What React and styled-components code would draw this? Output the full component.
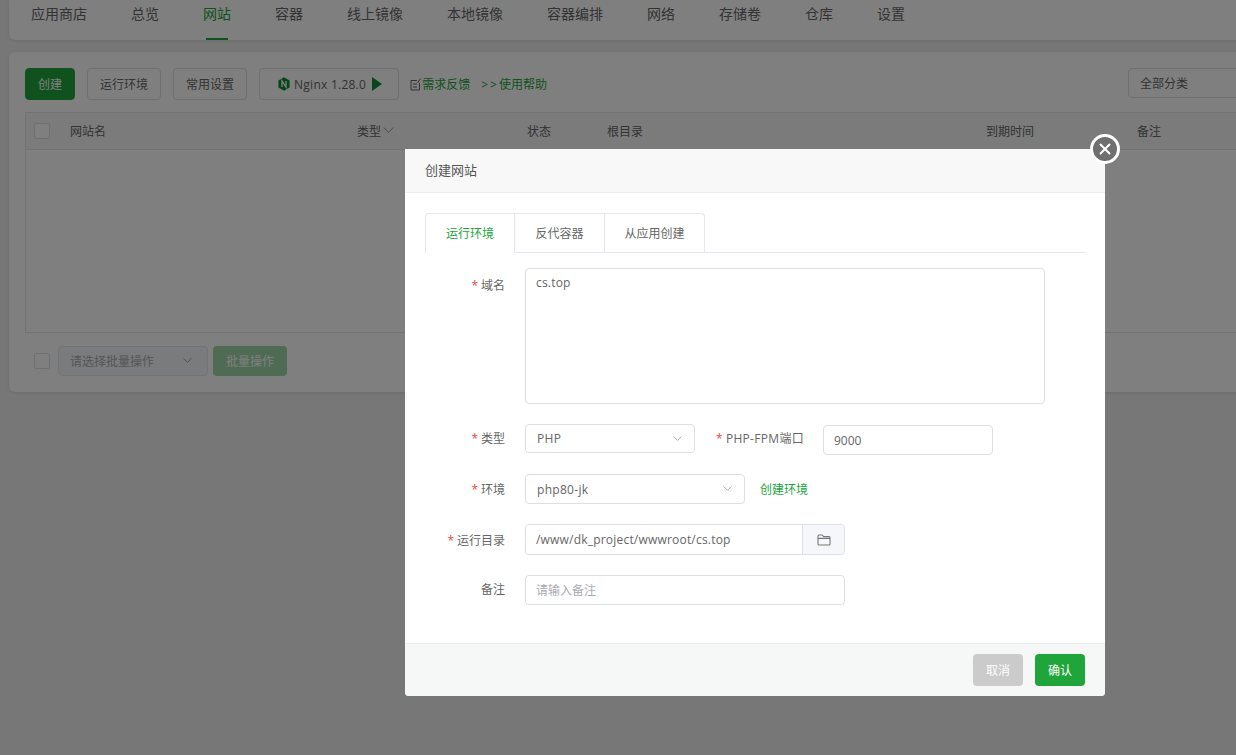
import React from 'react';
import styled, { createGlobalStyle } from 'styled-components';
import { X } from 'lucide-react';

const GlobalStyle = createGlobalStyle`
  html, body {
    margin: 0;
    height: 100%;
    overflow: hidden;
    background: #eeeeee;
    font-family: "Open Sans", "Noto Sans CJK SC", sans-serif;
    font-size: 12px;
    color: #666;
  }
  * { box-sizing: border-box; }
`;

const Page = styled.div`
  width: 1294px;
  padding-left: 9px;
`;

const NavBar = styled.nav`
  display: flex;
  gap: 44px;
  height: 40px;
  padding-left: 22px;
  background: #fff;
  border-radius: 0 0 6px 6px;
  box-shadow: 0 1px 3px rgba(0, 0, 0, 0.1);
  margin-bottom: 12px;
`;

const NavItem = styled.a`
  position: relative;
  font-size: 14px;
  line-height: 28px;
  color: ${(p) => (p.$active ? '#20a53a' : '#666')};
  &::after {
    content: '';
    display: ${(p) => (p.$active ? 'block' : 'none')};
    width: 22px;
    height: 2px;
    background: #20a53a;
    position: absolute;
    left: 3px;
    top: 38px;
  }
`;

const Panel = styled.section`
  height: 340px;
  padding: 16px;
  background: #fff;
  border-radius: 6px;
  box-shadow: 0 1px 3px rgba(0, 0, 0, 0.1);
`;

const Toolbar = styled.div`
  display: flex;
  align-items: flex-start;
  gap: 12px;
  height: 44px;
`;

const Button = styled.button`
  height: 32px;
  padding: ${(p) => (p.$wide ? '0 16px 0 18px' : '0 12px')};
  min-width: 50px;
  border: 1px solid ${(p) => (p.$primary ? '#20a53a' : '#dcdfe6')};
  border-radius: 4px;
  background: ${(p) => (p.$primary ? '#20a53a' : '#fff')};
  color: ${(p) => (p.$primary ? '#fff' : '#666')};
  font: inherit;
  letter-spacing: ${(p) => (p.$wide ? '0.25px' : '0')};
  display: inline-flex;
  align-items: center;
  justify-content: center;
  gap: 4px;
`;

const PlayGlyph = styled.svg`
  margin-left: 2px;
`;

const LinkRow = styled.div`
  display: flex;
  align-items: center;
  height: 32px;
  margin-left: -1px;
  color: #20a53a;
`;

const HelpLink = styled.a`
  margin-left: ${(p) => p.$gap || 0}px;
  color: #20a53a;
`;

const Arrows = styled.span`
  letter-spacing: 2px;
`;

const CategorySelect = styled.div`
  margin-left: auto;
  width: 150px;
  height: 30px;
  padding-left: 11px;
  line-height: 30px;
  border: 1px solid #dcdfe6;
  border-radius: 4px;
`;

const Table = styled.div`
  height: 221px;
  border: 1px solid #e4e7ed;
`;

const TableHead = styled.div`
  display: grid;
  grid-template-columns: 44px 287px 170px 80px 379px 151px 1fr;
  align-items: center;
  height: 37px;
  padding-bottom: 1px;
  background: #f6f6f6;
  border-bottom: 1px solid #e4e7ed;
`;

const HeadCell = styled.span`
  display: flex;
  align-items: center;
  gap: 2px;
  color: #666;
`;

const Check = styled.span`
  display: block;
  width: 16px;
  height: 16px;
  margin-left: ${(p) => p.$left || 0}px;
  border: 1px solid #dcdfe6;
  border-radius: 2px;
  background: #fff;
`;

const BatchRow = styled.div`
  display: flex;
  align-items: center;
  gap: 5px;
  margin-top: 13px;
`;

const BatchSelect = styled.div`
  display: flex;
  align-items: center;
  justify-content: space-between;
  width: 150px;
  height: 30px;
  margin-left: 3px;
  padding: 0 15px 0 11px;
  border: 1px solid #e4e7ed;
  border-radius: 4px;
  background: #f5f7fa;
  color: #a8abb2;
`;

const BatchButton = styled.button`
  width: 74px;
  height: 30px;
  border: none;
  border-radius: 4px;
  background: #a0d7a9;
  color: #fff;
  font: inherit;
`;

const Overlay = styled.div`
  position: fixed;
  inset: 0;
  background: rgba(0, 0, 0, 0.5);
  padding: 149px 0 0 405px;
`;

const Modal = styled.div`
  position: relative;
  display: flex;
  flex-direction: column;
  width: 700px;
  height: 547px;
  background: #fff;
  border-radius: 0 0 4px 4px;
`;

const CloseButton = styled.button`
  position: absolute;
  top: -15px;
  right: -15px;
  width: 30px;
  height: 30px;
  padding: 0;
  display: flex;
  align-items: center;
  justify-content: center;
  border: 3px solid #fff;
  border-radius: 50%;
  background: #6f6f6f;
  color: #fff;
`;

const ModalTitle = styled.header`
  height: 44px;
  padding-left: 20px;
  line-height: 43px;
  font-size: 13px;
  color: #555;
  background: #f8f8f8;
  border-bottom: 1px solid #eee;
`;

const ModalBody = styled.div`
  flex: 1;
  padding: 20px;
`;

const Tabs = styled.div`
  display: flex;
  height: 40px;
  margin-bottom: 15px;
  border-bottom: 1px solid #e4e7ed;
`;

const Tab = styled.div`
  width: ${(p) => p.$w}px;
  height: ${(p) => (p.$active ? '40px' : '39px')};
  line-height: 39px;
  text-align: center;
  background: #fff;
  color: ${(p) => (p.$active ? '#20a53a' : '#666')};
  border: 1px solid #e4e7ed;
  border-left-width: ${(p) => (p.$active ? '1px' : '0')};
  border-bottom: none;
  border-radius: ${(p) => p.$radius || '0'};
`;

const Form = styled.div`
  display: flex;
  flex-direction: column;
  gap: 20px;
`;

const Row = styled.div`
  display: flex;
  align-items: ${(p) => (p.$top ? 'flex-start' : 'center')};
`;

const Label = styled.label`
  flex: none;
  width: ${(p) => p.$w || 80}px;
  margin-left: ${(p) => p.$left || 0}px;
  margin-right: ${(p) => p.$right ?? 20}px;
  padding-top: ${(p) => p.$pt || 0}px;
  padding-bottom: ${(p) => p.$pb || 0}px;
  text-align: right;
  color: #666;
  white-space: nowrap;
  letter-spacing: ${(p) => (p.$latin ? '0.3px' : '0')};
`;

const Star = styled.span`
  color: #ef4444;
  margin-right: 3px;
`;

const Textarea = styled.textarea`
  display: block;
  width: 520px;
  height: 136px;
  padding: 5px 10px;
  resize: none;
  border: 1px solid #dcdfe6;
  border-radius: 4px;
  color: #666;
  font: inherit;
  letter-spacing: 0.2px;
  outline: none;
`;

const Input = styled.input`
  width: ${(p) => p.$w || 320}px;
  height: 30px;
  margin: ${(p) => (p.$low ? '1px 0 -1px' : '0')};
  padding: 0 10px;
  border: 1px solid #dcdfe6;
  border-radius: 4px;
  color: #666;
  font: inherit;
  outline: none;
  &::placeholder { color: #a8abb2; }
`;

const Select = styled.div`
  display: flex;
  align-items: center;
  justify-content: space-between;
  align-self: flex-start;
  width: ${(p) => p.$w}px;
  height: ${(p) => p.$h || 30}px;
  padding: 0 12px 0 11px;
  border: 1px solid #dcdfe6;
  border-radius: 4px;
  color: #666;
  letter-spacing: 0.3px;
`;

const GreenLink = styled.a`
  margin-left: 15px;
  color: #20a53a;
`;

const InputGroup = styled.div`
  display: flex;
  width: 320px;
  height: 31px;
  border: 1px solid #dcdfe6;
  border-radius: 4px;
  overflow: hidden;
`;

const GroupInput = styled.input`
  flex: 1;
  min-width: 0;
  padding: 0 10px;
  border: none;
  color: #666;
  font: inherit;
  letter-spacing: 0.2px;
  outline: none;
`;

const GroupAddon = styled.div`
  flex: none;
  width: 42px;
  display: flex;
  align-items: center;
  justify-content: center;
  background: #f5f7fa;
  border-left: 1px solid #dcdfe6;
  color: #777;
`;

const Footer = styled.footer`
  display: flex;
  justify-content: flex-end;
  gap: 12px;
  height: 53px;
  padding: 10px 20px 0;
  background: #f6f8f8;
  border-top: 1px solid #eee;
  border-radius: 0 0 4px 4px;
`;

const FooterButton = styled.button`
  width: 50px;
  height: 32px;
  border: none;
  border-radius: 4px;
  background: ${(p) => (p.$primary ? '#20a53a' : '#cbcbcb')};
  color: #fff;
  font: inherit;
`;

const NAV = ['应用商店', '总览', '网站', '容器', '线上镜像', '本地镜像', '容器编排', '网络', '存储卷', '仓库', '设置'];

function NginxIcon() {
  return (
    <svg width="12" height="14" viewBox="0 0 12 14">
      <path d="M6 0.3 11.6 3.5V10.5L6 13.7 0.4 10.5V3.5Z" fill="#0f8a3c" />
      <path d="M4 10V4L8 10V4" fill="none" stroke="#fff" strokeWidth="1.3" />
    </svg>
  );
}

function PlayIcon() {
  return (
    <PlayGlyph width="10" height="14" viewBox="0 0 10 14">
      <path d="M0 0 10 7 0 14Z" fill="#0f8a3c" />
    </PlayGlyph>
  );
}

function FeedbackIcon() {
  return (
    <svg width="11" height="13" viewBox="0 0 11 13" fill="none" stroke="#666" strokeWidth="1">
      <path d="M7 2.5H1V12H9.5V5" />
      <path d="M3 6H7M3 9H7" />
      <path d="M7.5 5 10.5 0.5" />
    </svg>
  );
}

function FolderIcon() {
  return (
    <svg width="14" height="12" viewBox="0 0 14 12" fill="none" stroke="currentColor" strokeWidth="1.1" strokeLinejoin="round">
      <path d="M1 2.2C1 1.5 1.4 1 2 1H5.2L6.6 2.6H12C12.6 2.6 13 3.1 13 3.6V10C13 10.6 12.6 11 12 11H2C1.4 11 1 10.6 1 10Z" />
      <path d="M1 4.4H13" />
    </svg>
  );
}

function Chevron({ w = 9 }) {
  return (
    <svg width={w} height={w * 0.56} viewBox="0 0 12 7" fill="none" stroke="#888" strokeWidth="1">
      <path d="M0.5 0.5 6 6 11.5 0.5" />
    </svg>
  );
}

function Required() {
  return <Star>*</Star>;
}

function App() {
  return (
    <>
      <GlobalStyle />
      <Page>
        <NavBar>
          {NAV.map((item) => (
            <NavItem key={item} $active={item === '网站'}>{item}</NavItem>
          ))}
        </NavBar>
        <Panel>
          <Toolbar>
            <Button $primary>创建</Button>
            <Button>运行环境</Button>
            <Button>常用设置</Button>
            <Button $wide>
              <NginxIcon />
              <span>Nginx 1.28.0</span>
              <PlayIcon />
            </Button>
            <LinkRow>
              <FeedbackIcon />
              <HelpLink $gap={1}>需求反馈</HelpLink>
              <HelpLink $gap={11}><Arrows>&gt;&gt;</Arrows>使用帮助</HelpLink>
            </LinkRow>
            <CategorySelect>全部分类</CategorySelect>
          </Toolbar>
          <Table>
            <TableHead>
              <Check $left={8} />
              <HeadCell>网站名</HeadCell>
              <HeadCell>类型<Chevron w={11} /></HeadCell>
              <HeadCell>状态</HeadCell>
              <HeadCell>根目录</HeadCell>
              <HeadCell>到期时间</HeadCell>
              <HeadCell>备注</HeadCell>
            </TableHead>
          </Table>
          <BatchRow>
            <Check $left={9} />
            <BatchSelect>请选择批量操作<Chevron /></BatchSelect>
            <BatchButton>批量操作</BatchButton>
          </BatchRow>
        </Panel>
      </Page>
      <Overlay>
        <Modal>
          <CloseButton><X size={18} strokeWidth={2.5} /></CloseButton>
          <ModalTitle>创建网站</ModalTitle>
          <ModalBody>
            <Tabs>
              <Tab $active $w={90} $radius="4px 0 0 0">运行环境</Tab>
              <Tab $w={90}>反代容器</Tab>
              <Tab $w={100} $radius="0 4px 0 0">从应用创建</Tab>
            </Tabs>
            <Form>
              <Row $top>
                <Label $pt={8}><Required />域名</Label>
                <Textarea readOnly value="cs.top" />
              </Row>
              <Row>
                <Label $pb={2}><Required />类型</Label>
                <Select $w={170} $h={29}>PHP<Chevron /></Select>
                <Label $latin $pb={2} $w={89} $right={19} $left={20}><Required />PHP-FPM端口</Label>
                <Input $low $w={170} readOnly value="9000" />
              </Row>
              <Row>
                <Label><Required />环境</Label>
                <Select $w={220}>php80-jk<Chevron /></Select>
                <GreenLink>创建环境</GreenLink>
              </Row>
              <Row>
                <Label><Required />运行目录</Label>
                <InputGroup>
                  <GroupInput readOnly value="/www/dk_project/wwwroot/cs.top" />
                  <GroupAddon><FolderIcon /></GroupAddon>
                </InputGroup>
              </Row>
              <Row>
                <Label $pb={2}>备注</Label>
                <Input placeholder="请输入备注" />
              </Row>
            </Form>
          </ModalBody>
          <Footer>
            <FooterButton>取消</FooterButton>
            <FooterButton $primary>确认</FooterButton>
          </Footer>
        </Modal>
      </Overlay>
    </>
  );
}

export default App;
